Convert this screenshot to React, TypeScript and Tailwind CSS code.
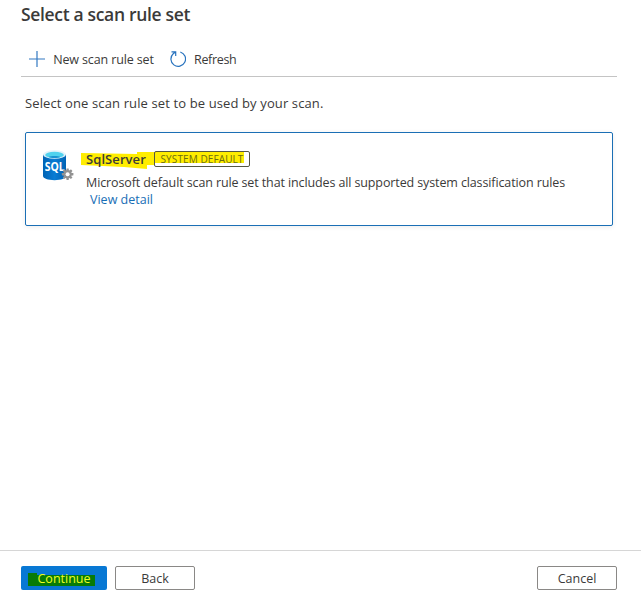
import type { ReactNode } from 'react';

function SqlIcon() {
  return (
    <svg className="h-[32px] w-[32px] shrink-0" viewBox="0 0 32 32">
      <defs>
        <linearGradient id="body" x1="0" x2="1">
          <stop offset="0" stopColor="#0063b4" />
          <stop offset="0.5" stopColor="#0a7cd4" />
          <stop offset="1" stopColor="#0063b4" />
        </linearGradient>
      </defs>
      <path d="M1 4.500v21.500c0 2.300 5 4.200 11.500 4.200S24 28.300 24 26V4.500z" fill="url(#body)" />
      <ellipse cx="12.500" cy="4.500" rx="11.500" ry="4.300" fill="#e4f3fa" />
      <ellipse cx="12.500" cy="4.900" rx="9.300" ry="3.100" fill="#50d2ee" />
      <path d="M6.500 6.900c3-1.200 9-1.200 12 0-3.200 1.300-9 1.300-12 0z" fill="#1b93d0" />
      <text x="12.700" y="20.700" textAnchor="middle" textLength="20" lengthAdjust="spacingAndGlyphs" fontSize="11.500" fontWeight="700" fill="#fff" className="font-['Open_Sans',sans-serif]">SQL</text>
      <g transform="translate(25.600 24.200)">
        <g fill="#929292">
          <circle r="4.200" />
          {[0, 45, 90, 135].map((a) => (
            <rect key={a} x="-1.200" y="-5.800" width="2.400" height="11.600" rx="0.400" transform={`rotate(${a})`} />
          ))}
        </g>
        <circle r="2" fill="#fff" />
      </g>
    </svg>
  );
}

function Button({ children, className }: { children: ReactNode; className: string }) {
  return (
    <button className={`flex h-6 items-center justify-center rounded-[2px] ${className}`}>{children}</button>
  );
}

export default function App() {
  return (
    <main className="flex h-[605px] w-[641px] flex-col bg-white font-['Open_Sans','Noto_Sans',sans-serif] text-[12.500px] leading-[17px] whitespace-nowrap text-[#3b3a39]">
      <header className="ml-[21px] h-[48px] pt-[2px]">
        <h1 className="text-[17.500px] leading-6 font-semibold tracking-[-0.330px]">Select a scan rule set</h1>
      </header>
      <div className="mr-6 ml-[21px] flex h-[29px] items-start border-b border-[#c4c4c4] pl-2 tracking-[-0.130px]">
        <button className="flex h-[22px] items-center">
          <svg className="mr-2 h-4 w-4" viewBox="0 0 16 16" fill="none" stroke="#3379c2" strokeWidth="1.200">
            <path d="M8 0v16M0 8h16" />
          </svg>
          <span className="w-[101px]">New scan rule set</span>
        </button>
        <button className="ml-4 flex h-[22px] items-center">
          <svg className="mr-2 h-4 w-4" viewBox="0 0 16 16" fill="none" stroke="#2873be" strokeWidth="1.200">
            <path d="M10.300 1A7.300 7.300 0 1 1 3.200 2.700L5.400 1M1.500 0.800h4.200v4.200" />
          </svg>
          <span className="tracking-[-0.320px]">Refresh</span>
        </button>
      </div>
      <p className="mt-[18px] ml-[25px] text-[13px] tracking-[0.120px]">Select one scan rule set to be used by your scan.</p>
      <section className="mt-5 mr-7 ml-[25px] flex h-[94px] rounded-[2px] border border-[#1b6fb5] pt-[17px] pl-4 shadow-[0_1px_5px_rgba(0,0,0,0.08)]">
        <SqlIcon />
        <div className="ml-3">
          <div className="relative isolate flex h-[18px] items-center">
            <svg className="absolute top-0 left-[-5px] -z-10 h-[20px] w-[172px]" viewBox="0 0 172 20">
              <path d="M0 3L56 4V2H163V13H73V15H66V19L43 17L0 15z" fill="#ffed00" />
            </svg>
            <span className="w-[68px] text-[13px] font-semibold tracking-[0.080px]">SqlServer</span>
            <span className="flex h-4 w-24 items-center justify-center rounded-[2px] border border-[#555743] text-[10px] tracking-[0.100px] text-[#6d6c10]">SYSTEM DEFAULT</span>
          </div>
          <p className="mt-[6px] tracking-[-0.115px]">Microsoft default scan rule set that includes all supported system classification rules</p>
          <a className="ml-1 block text-[#176eb6]">View detail</a>
        </div>
      </section>
      <footer className="mt-auto flex h-[55px] items-start border-t border-[#d6d6d6] pt-[15px] pr-6 pl-[21px]">
        <Button className="relative isolate w-[86px] bg-[#0878d4] text-[#efff20]">
          <svg className="absolute top-[7px] left-[7px] -z-10 h-[13px] w-[67px]" viewBox="0 0 67 13">
            <path d="M0 0H9V2H67V13H0z" fill="#087b08" />
          </svg>
          Continue
        </Button>
        <Button className="ml-2 w-20 border border-[#8a8886]">Back</Button>
        <Button className="ml-auto w-20 border border-[#8a8886]">Cancel</Button>
      </footer>
    </main>
  );
}
